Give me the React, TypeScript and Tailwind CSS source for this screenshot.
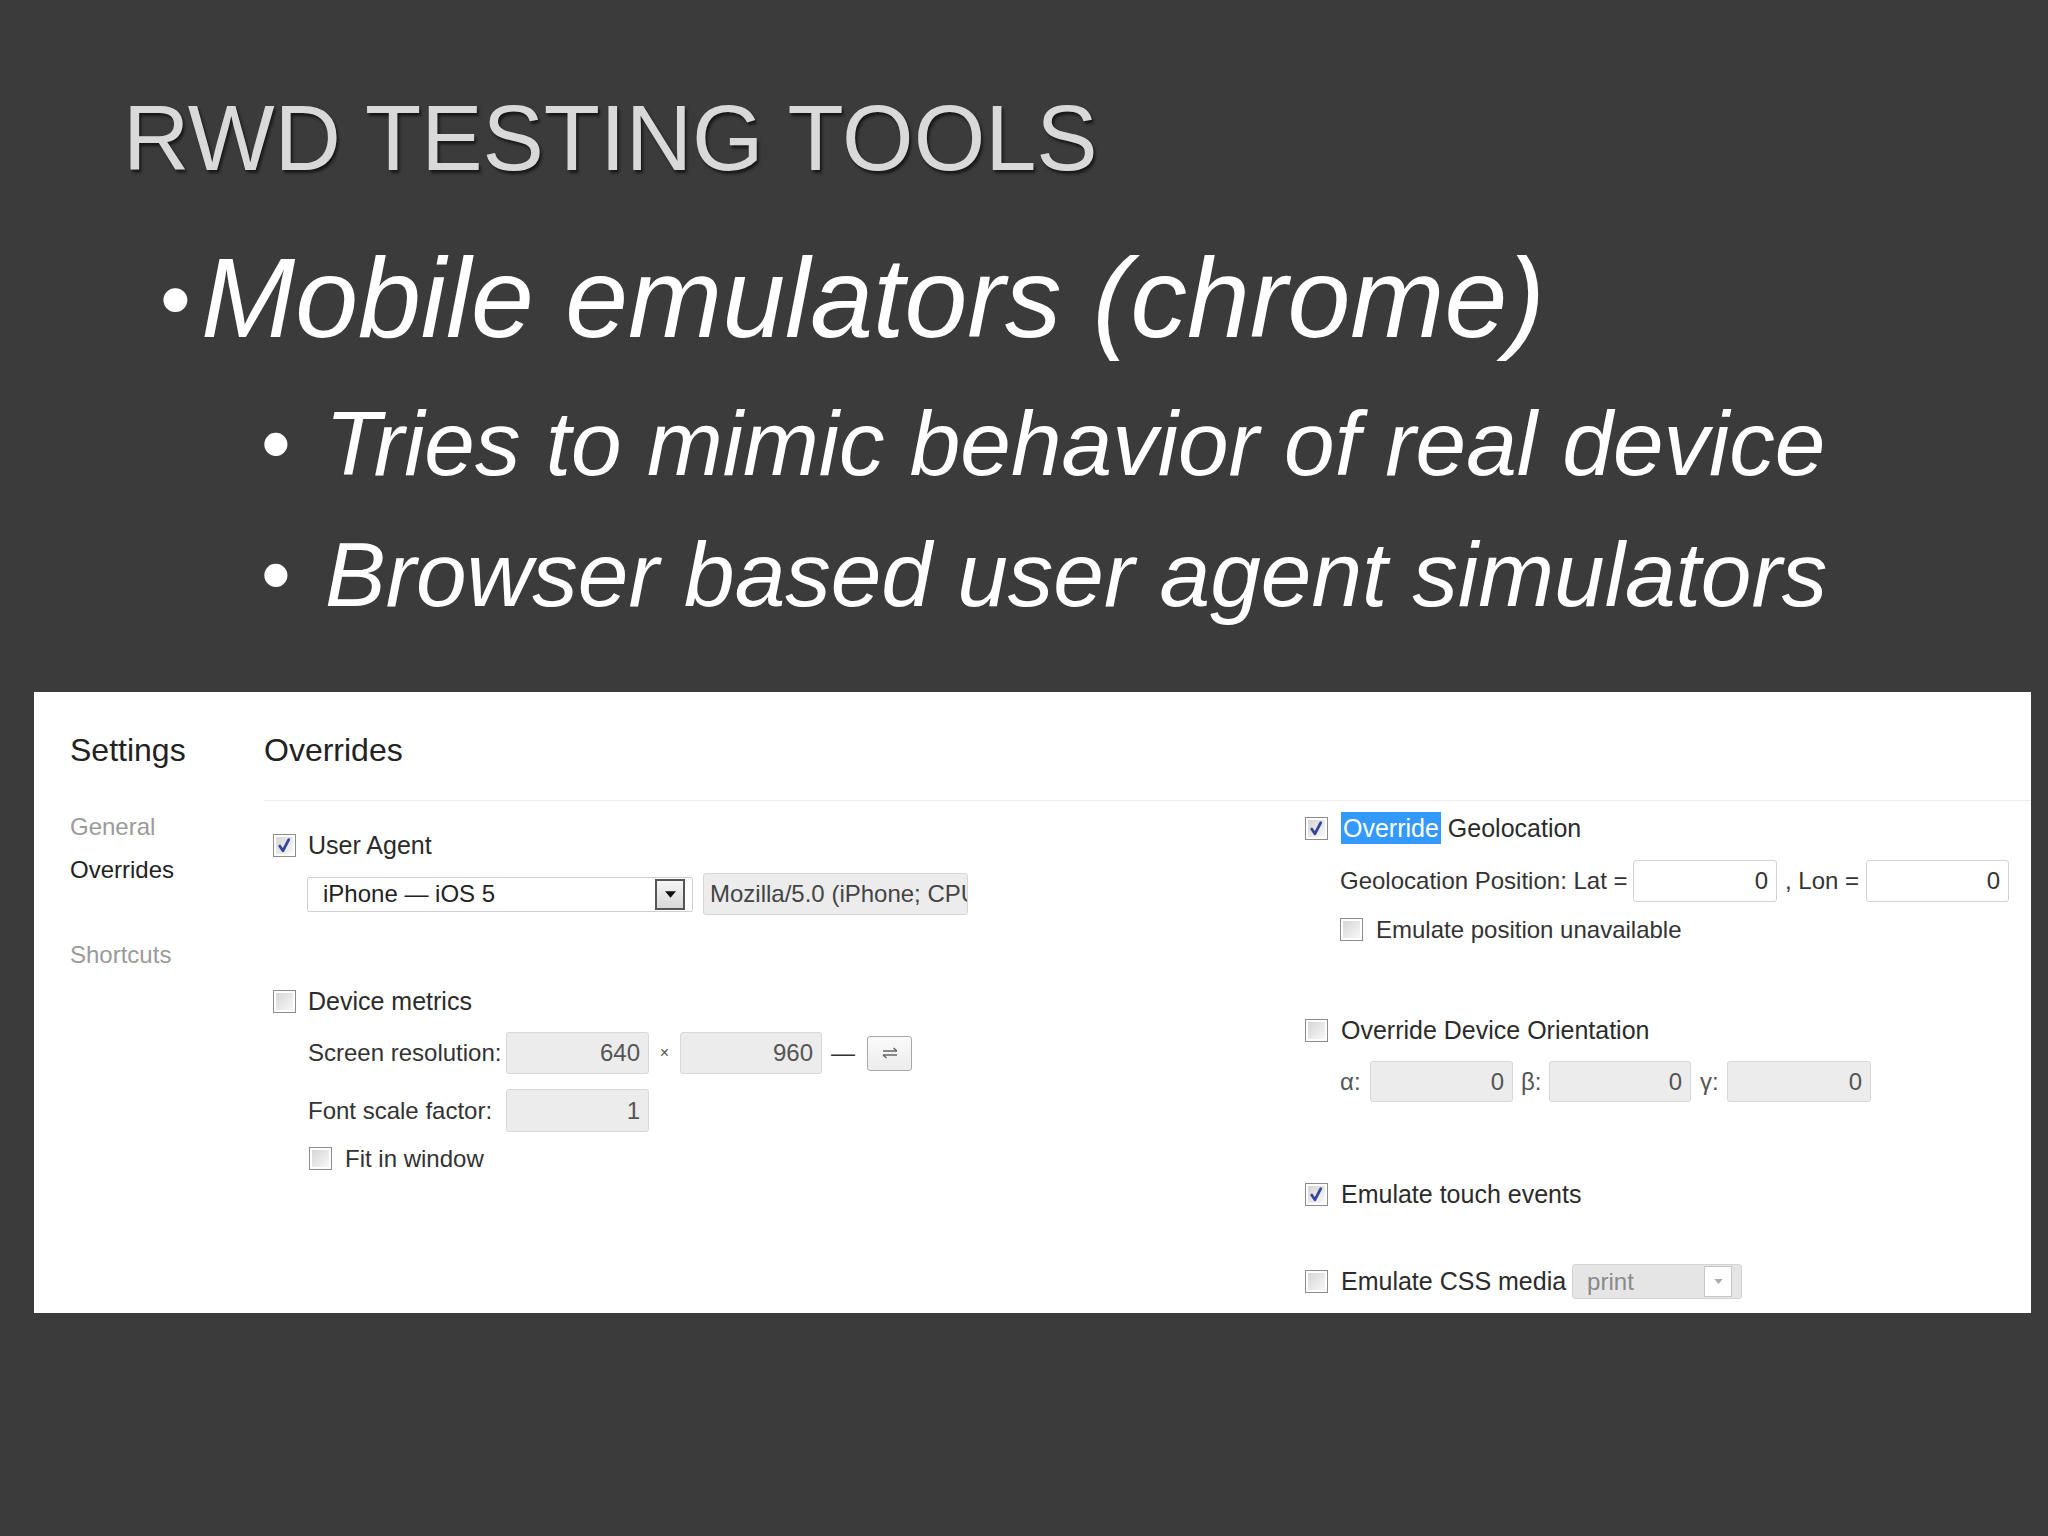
import React from 'react';

const font = "font-['Liberation_Sans',Arial,sans-serif]";

function CheckBox({ checked = false }: { checked?: boolean }) {
  return (
    <div className="w-[23px] h-[23px] shrink-0 border border-[#8c8c8c] bg-white p-[2px]">
      <div className="w-full h-full bg-linear-to-br from-[#d6d6d6] to-[#f8f8f8] flex items-center justify-center">
        {checked && (
          <svg viewBox="0 0 16 16" className="w-[17px] h-[17px]">
            <path d="M3.5 8.5 L6.5 13 L12 2.5" fill="none" stroke="#34459a" strokeWidth="2.6" strokeLinecap="round" strokeLinejoin="round" />
          </svg>
        )}
      </div>
    </div>
  );
}

function Field({ value, className, white = false }: { value: string; className: string; white?: boolean }) {
  return (
    <div
      className={`${className} h-full shrink-0 rounded-[3px] border flex items-center justify-end pr-[8px] text-[24px] leading-none ${
        white ? 'bg-white border-[#d2d2d2] text-[#333]' : 'bg-[#ececec] border-[#d8d8d8] text-[#555]'
      }`}
    >
      {value}
    </div>
  );
}

export default function App() {
  return (
    <div className={`${font} w-[2048px] h-[1536px] bg-[#3b3b3b] overflow-hidden`}>
      {/* Slide title */}
      <div className="ml-[123px] pt-[92px] text-[92px] leading-none text-[#d9d9d9] [text-shadow:2px_3px_3px_rgba(0,0,0,0.6)]">
        RWD TESTING TOOLS
      </div>

      {/* Bullets */}
      <div className="ml-[160px] mt-[58px] h-[113px] flex items-center italic text-white">
        <span className="w-[31px] text-center not-italic text-[88px] leading-none">•</span>
        <span className="ml-[10px] text-[113px] leading-none">Mobile emulators (chrome)</span>
      </div>
      <div className="ml-[260px] mt-[43px] h-[91px] flex items-center italic text-white">
        <span className="w-[32px] text-center not-italic text-[85px] leading-none">•</span>
        <span className="ml-[33px] text-[91px] leading-none">Tries to mimic behavior of real device</span>
      </div>
      <div className="ml-[260px] mt-[40px] h-[91px] flex items-center italic text-white">
        <span className="w-[32px] text-center not-italic text-[85px] leading-none">•</span>
        <span className="ml-[33px] text-[91px] leading-none">Browser based user agent simulators</span>
      </div>

      {/* DevTools settings screenshot */}
      <div className="ml-[34px] mt-[72px] w-[1997px] h-[621px] bg-white flex text-[#2b2b2b]">
        {/* Left nav */}
        <div className="w-[230px] shrink-0 pl-[36px] pt-[42px] text-[24px] leading-none">
          <div className="text-[32px] text-[#222]">Settings</div>
          <div className="mt-[49px] text-[#9a9a9a]">General</div>
          <div className="mt-[19px] text-[#222]">Overrides</div>
          <div className="mt-[61px] text-[#9a9a9a]">Shortcuts</div>
        </div>

        <div className="flex-1 flex flex-col">
          <div className="h-[109px] shrink-0 pt-[42px] border-b border-[#ececec] text-[32px] leading-none text-[#222]">
            Overrides
          </div>

          <div className="flex">
            {/* Left column */}
            <div className="w-[1041px] shrink-0 pl-[9px]">
              <div className="mt-[33px] h-[23px] flex items-center">
                <CheckBox checked />
                <span className="ml-[12px] text-[25px] leading-none">User Agent</span>
              </div>
              <div className="mt-[16px] ml-[34px] h-[42px] flex items-center">
                <div className="w-[386px] h-[35px] border border-[#d0d0d0] rounded-[2px] bg-white flex items-center">
                  <span className="flex-1 pl-[15px] text-[24px] leading-none text-[#222]">iPhone — iOS 5</span>
                  <div className="w-[30px] h-[31px] mr-[7px] border-2 border-[#555] bg-linear-to-b from-[#f6f6f6] to-[#d8d8d8] flex items-center justify-center">
                    <svg viewBox="0 0 10 6" className="w-[11px] h-[7px]">
                      <polygon points="0,0 10,0 5,6" fill="#111" />
                    </svg>
                  </div>
                </div>
                <div className="ml-[10px] w-[265px] h-[42px] bg-[#ececec] border border-[#d6d6d6] rounded-[3px] overflow-hidden whitespace-nowrap pl-[6px] flex items-center text-[24px] leading-none text-[#444]">
                  Mozilla/5.0 (iPhone; CPU OS 5_0 like Mac OS X)
                </div>
              </div>

              <div className="mt-[75px] h-[23px] flex items-center">
                <CheckBox />
                <span className="ml-[12px] text-[25px] leading-none">Device metrics</span>
              </div>
              <div className="mt-[19px] ml-[35px] h-[42px] flex items-center text-[24px] leading-none text-[#333]">
                <span className="w-[198px] shrink-0">Screen resolution:</span>
                <Field value="640" className="w-[143px]" />
                <span className="w-[31px] text-center text-[16px] text-[#555]">×</span>
                <Field value="960" className="w-[142px]" />
                <span className="ml-[9px]">—</span>
                <div className="ml-[12px] w-[45px] h-[35px] rounded-[3px] border border-[#a8a8a8] bg-linear-to-b from-[#fafafa] to-[#ececec] flex items-center justify-center">
                  <svg viewBox="0 0 18 14" className="w-[18px] h-[14px]">
                    <path d="M2 5 H16 M16 5 L12.5 2" fill="none" stroke="#666" strokeWidth="1.4" />
                    <path d="M2 9 H16 M2 9 L5.5 12" fill="none" stroke="#666" strokeWidth="1.4" />
                  </svg>
                </div>
              </div>
              <div className="mt-[15px] ml-[35px] h-[43px] flex items-center text-[24px] leading-none text-[#333]">
                <span className="w-[198px] shrink-0">Font scale factor:</span>
                <Field value="1" className="w-[143px]" />
              </div>
              <div className="mt-[15px] ml-[36px] h-[23px] flex items-center">
                <CheckBox />
                <span className="ml-[13px] text-[24px] leading-none text-[#333]">Fit in window</span>
              </div>
            </div>

            {/* Right column */}
            <div className="flex-1">
              <div className="mt-[16px] h-[23px] flex items-center">
                <CheckBox checked />
                <span className="ml-[13px] text-[25px] leading-none">
                  <span className="bg-[#3399ff] text-white px-[2px] py-[2px]">Override</span> Geolocation
                </span>
              </div>
              <div className="mt-[20px] ml-[35px] h-[42px] flex items-center text-[24px] leading-none text-[#333]">
                <span className="w-[293px] shrink-0">Geolocation Position: Lat =</span>
                <Field value="0" className="w-[144px]" white />
                <span className="w-[89px] shrink-0 pl-[8px]">, Lon =</span>
                <Field value="0" className="w-[143px]" white />
              </div>
              <div className="mt-[16px] ml-[35px] h-[23px] flex items-center">
                <CheckBox />
                <span className="ml-[13px] text-[24px] leading-none text-[#333]">Emulate position unavailable</span>
              </div>

              <div className="mt-[78px] h-[23px] flex items-center">
                <CheckBox />
                <span className="ml-[13px] text-[25px] leading-none">Override Device Orientation</span>
              </div>
              <div className="mt-[19px] ml-[35px] h-[41px] flex items-center text-[24px] leading-none text-[#555]">
                <span className="w-[30px] shrink-0">α:</span>
                <Field value="0" className="w-[143px]" />
                <span className="w-[36px] shrink-0 pl-[8px]">β:</span>
                <Field value="0" className="w-[142px]" />
                <span className="w-[36px] shrink-0 pl-[9px]">γ:</span>
                <Field value="0" className="w-[144px]" />
              </div>

              <div className="mt-[81px] h-[23px] flex items-center">
                <CheckBox checked />
                <span className="ml-[13px] text-[25px] leading-none">Emulate touch events</span>
              </div>

              <div className="mt-[58px] h-[35px] flex items-center">
                <CheckBox />
                <span className="ml-[13px] text-[25px] leading-none">Emulate CSS media</span>
                <div className="ml-[6px] w-[170px] h-[35px] bg-[#e5e5e5] border border-[#d3d3d3] rounded-[3px] flex items-center">
                  <span className="flex-1 pl-[14px] text-[24px] leading-none text-[#8a8a8a]">print</span>
                  <div className="w-[28px] h-[31px] mr-[9px] bg-white border border-[#c6c6c6] flex items-center justify-center">
                    <svg viewBox="0 0 10 6" className="w-[9px] h-[5px]">
                      <polygon points="0,0 10,0 5,6" fill="#aaa" />
                    </svg>
                  </div>
                </div>
              </div>
            </div>
          </div>
        </div>
      </div>
    </div>
  );
}
